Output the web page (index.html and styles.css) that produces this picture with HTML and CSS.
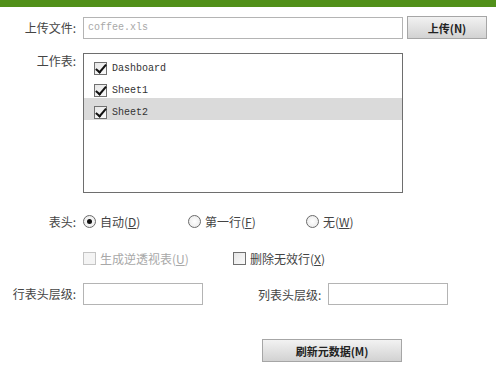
FILE: index.html
```html
<!DOCTYPE html>
<html>
<head>
<meta charset="utf-8">
<link rel="stylesheet" href="styles.css">
</head>
<body>
<div class="topbar"></div>
<div class="form">
  <div class="row row-upload">
    <label class="lbl">上传文件:</label>
    <input class="txt file" type="text" placeholder="coffee.xls">
    <button class="btn btn-upload">上传(N)</button>
  </div>
  <div class="row row-sheets">
    <label class="lbl lbl-top">工作表:</label>
    <div class="listbox">
      <div class="item"><span class="cb checked"></span><span class="name">Dashboard</span></div>
      <div class="item"><span class="cb checked"></span><span class="name">Sheet1</span></div>
      <div class="item selected"><span class="cb checked"></span><span class="name">Sheet2</span></div>
    </div>
  </div>
  <div class="row row-radio">
    <label class="lbl">表头:</label>
    <div class="opt opt1"><span class="radio on"></span><span>自动(<u>D</u>)</span></div>
    <div class="opt opt2"><span class="radio"></span><span>第一行(<u>F</u>)</span></div>
    <div class="opt opt3"><span class="radio"></span><span>无(<u>W</u>)</span></div>
  </div>
  <div class="row row-check">
    <div class="lbl"></div>
    <div class="opt disabled"><span class="cb"></span><span>生成逆透视表(<u>U</u>)</span></div>
    <div class="opt opt-del"><span class="cb"></span><span>删除无效行(<u>X</u>)</span></div>
  </div>
  <div class="row row-levels">
    <label class="lbl">行表头层级:</label>
    <input class="txt level" type="text">
    <label class="lbl2">列表头层级:</label>
    <input class="txt level" type="text">
  </div>
  <div class="row row-refresh">
    <button class="btn btn-refresh">刷新元数据(M)</button>
  </div>
</div>
</body>
</html>
```

FILE: styles.css
```css
* { box-sizing: border-box; }
body {
  margin: 0;
  background: #fff;
  font-family: "Noto Sans CJK SC", "Noto Sans", sans-serif;
  font-size: 12px;
  color: #444;
}
.topbar { height: 7px; background: #51901a; }
.form { padding-top: 9px; }
.row { display: flex; align-items: center; }
.lbl {
  width: 76px;
  margin-right: 7px;
  text-align: right;
  line-height: 16px;
  flex: none;
}
.txt {
  border: 1px solid #b4b4b4;
  height: 22px;
  padding: 0 4px;
  margin: 0;
  font-family: "Liberation Mono", monospace;
  font-size: 10px;
  color: #333;
  outline: none;
}
.txt::placeholder { color: #a8a8a8; }
.file { width: 320px; }
.btn {
  margin: 0;
  padding: 0;
  border: 1px solid #a6a6a6;
  background: linear-gradient(#f2f2f2, #d2d2d2);
  font-family: "Noto Sans CJK SC", sans-serif;
  font-weight: bold;
  font-size: 11px;
  color: #222;
}
.btn-upload { width: 80px; height: 23px; margin-left: 4px; }

.row-sheets { align-items: flex-start; margin-top: 14px; }
.lbl-top { margin-top: 0; }
.listbox {
  width: 320px;
  height: 140px;
  border: 1px solid #6e6e6e;
}
.item {
  display: flex;
  align-items: center;
  height: 22px;
  padding-left: 10px;
  padding-top: 6px;
  font-family: "Liberation Mono", monospace;
  font-size: 10px;
  color: #333;
}
.item.selected { background: #dadada; }
.item .name { margin-left: 5px; }

.cb {
  width: 13px;
  height: 13px;
  border: 1px solid #707070;
  background: linear-gradient(135deg, #e6e6e6, #fafafa);
  position: relative;
  flex: none;
}
.cb.checked::after {
  content: "";
  position: absolute;
  left: 3px;
  top: -1px;
  width: 4px;
  height: 9px;
  border: solid #111;
  border-width: 0 2px 2px 0;
  transform: rotate(40deg);
}
.radio {
  width: 13px;
  height: 13px;
  border-radius: 50%;
  border: 1px solid #6a6a6a;
  background: radial-gradient(#fff, #e6e6e6);
  position: relative;
  flex: none;
}
.radio.on::after {
  content: "";
  position: absolute;
  left: 3px;
  top: 3px;
  width: 5px;
  height: 5px;
  border-radius: 50%;
  background: #111;
}
.opt { display: flex; align-items: center; gap: 4px; }
.opt u { text-decoration: underline; }
.row-radio { margin-top: 20px; }
.opt1 { width: 105px; }
.opt2 { width: 118px; }
.row-check { margin-top: 20px; }
.disabled { color: #a8a8a8; width: 150px; }
.disabled .cb { border-color: #c4c4c4; background: #f4f4f4; }

.row-levels { margin-top: 16px; }
.level { width: 120px; height: 22px; }
.lbl2 { margin-left: 55px; margin-right: 7px; }
.row-refresh { margin-top: 34px; padding-left: 262px; }
.btn-refresh { width: 140px; height: 23px; }
```
